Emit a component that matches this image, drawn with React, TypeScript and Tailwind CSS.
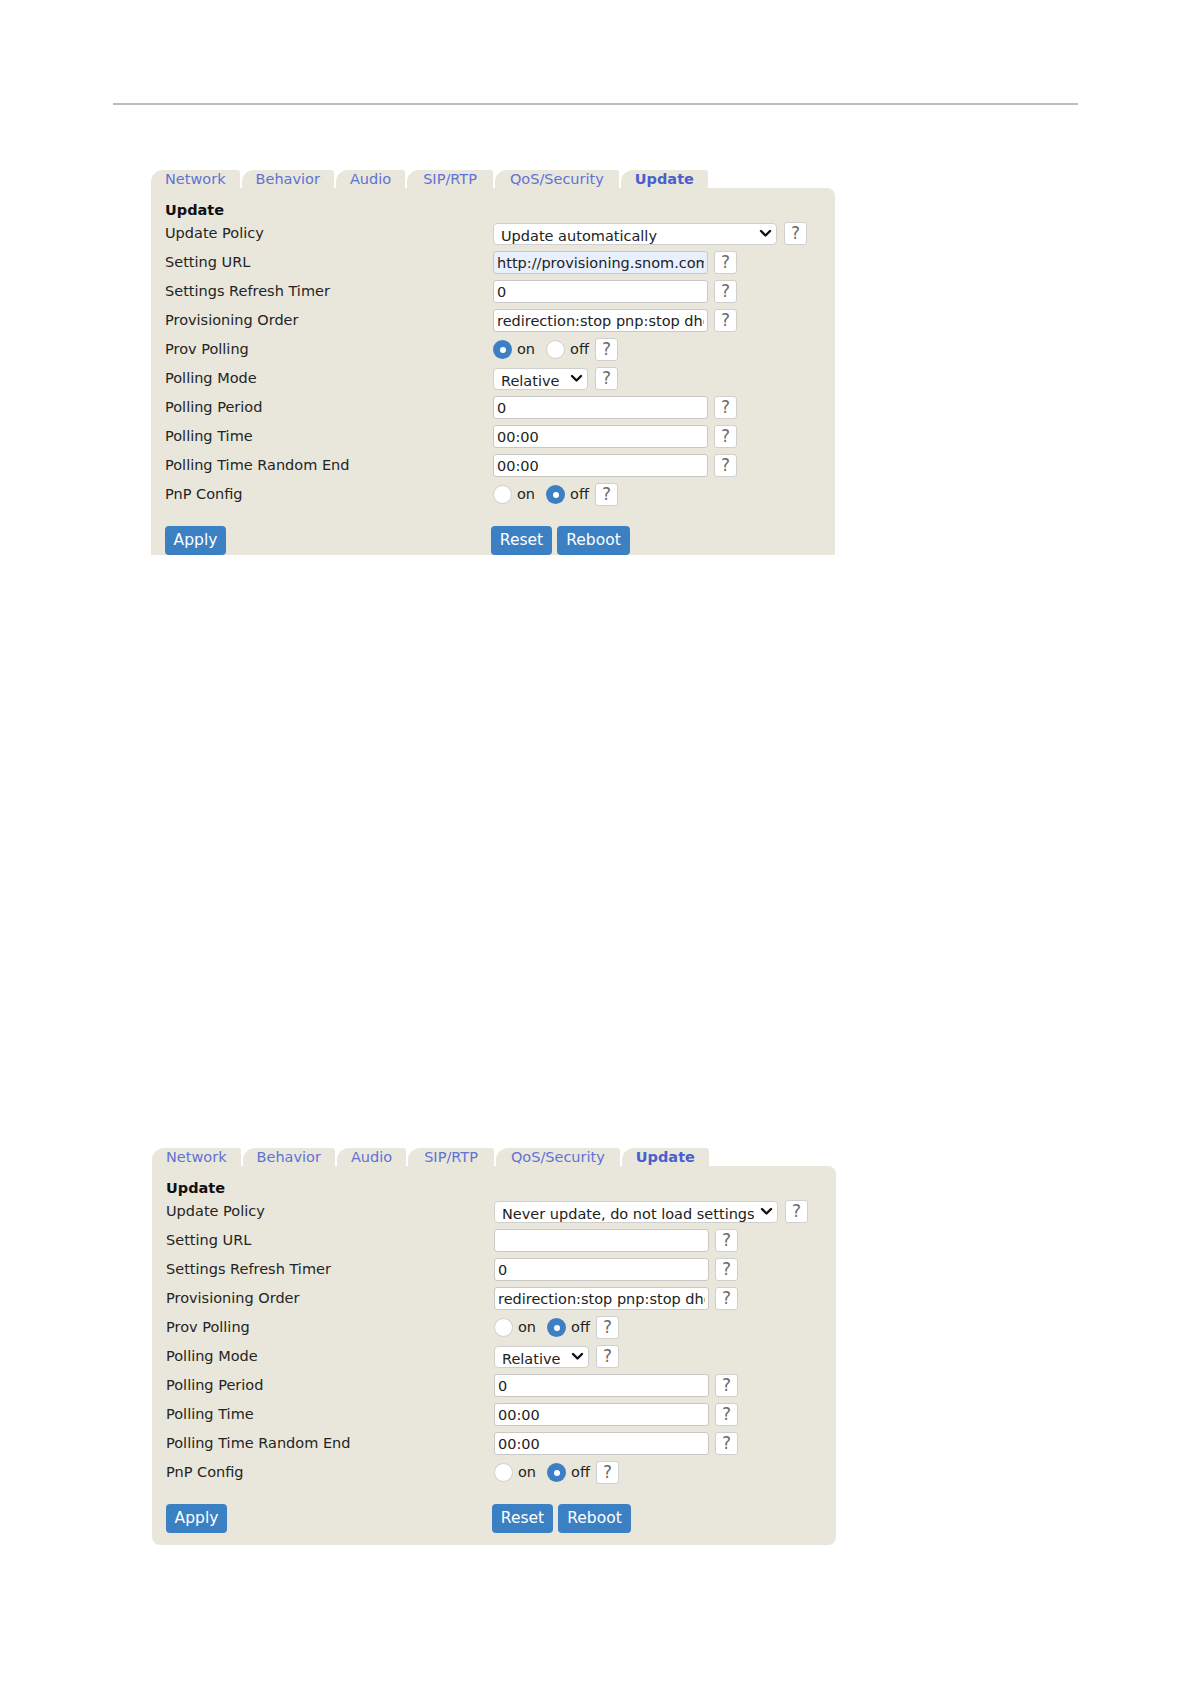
import React from "react";

// per-tab padding keeps the label spacing of the original page
const tabs = [
  { name: "Network", pad: "px-[14px]" },
  { name: "Behavior", pad: "px-[14px]" },
  { name: "Audio", pad: "px-[14px]" },
  { name: "SIP/RTP", pad: "px-[16px]" },
  { name: "QoS/Security", pad: "px-[15px]" },
  { name: "Update", pad: "px-[14px]" },
];

function Help() {
  return (
    <div className="flex h-[23px] w-[23px] items-center justify-center rounded-[3px] border border-[#cfcfcf] bg-white text-[17px] leading-none text-[#6c6c6c]">
      ?
    </div>
  );
}

function Chevron() {
  return (
    <svg width="13" height="9" viewBox="0 0 13 9" className="shrink-0">
      <path d="M2 2 L6.5 6.5 L11 2" fill="none" stroke="#111" strokeWidth="2.4" strokeLinecap="round" strokeLinejoin="round" />
    </svg>
  );
}

function Select({ value, width }: { value: string; width: string }) {
  return (
    <div className={`flex h-[22px] ${width} items-start justify-between overflow-hidden rounded-[4px] border border-[#cfcfcf] bg-white pl-[7px] pr-[4px]`}>
      <span className="pt-[4px] leading-[17px] whitespace-nowrap text-[#222]">{value}</span>
      <span className="flex h-full items-center">
        <Chevron />
      </span>
    </div>
  );
}

function TextBox({ value, autofill }: { value: string; autofill?: boolean }) {
  return (
    <input
      readOnly
      value={value}
      className={`h-[23px] w-[215px] rounded-[3px] border border-[#c8c8c8] px-[3px] text-[14.5px] text-[#222] outline-none ${
        autofill ? "bg-[#e8f0fe]" : "bg-white"
      }`}
    />
  );
}

function Radio({ checked }: { checked: boolean }) {
  return checked ? (
    <span className="flex h-[19px] w-[19px] shrink-0 items-center justify-center rounded-full bg-[#3d7fc5]">
      <span className="h-[6px] w-[6px] rounded-full bg-white" />
    </span>
  ) : (
    <span className="block h-[19px] w-[19px] shrink-0 rounded-full border border-[#cfcfcf] bg-white" />
  );
}

function OnOff({ on }: { on: boolean }) {
  return (
    <div className="flex items-center">
      <Radio checked={on} />
      <span className="ml-[5px] text-[#222]">on</span>
      <span className="ml-[11px] flex">
        <Radio checked={!on} />
      </span>
      <span className="ml-[5px] mr-[6px] text-[#222]">off</span>
      <Help />
    </div>
  );
}

function Row({ label, children }: { label: string; children: React.ReactNode }) {
  return (
    <div className="flex h-[29px] items-center">
      <div className="w-[328px] text-[#242424]">{label}</div>
      <div className="flex items-center">{children}</div>
    </div>
  );
}

function Field({ value, autofill }: { value: string; autofill?: boolean }) {
  return (
    <div className="flex items-center gap-[6px]">
      <TextBox value={value} autofill={autofill} />
      <Help />
    </div>
  );
}

type PanelProps = {
  policy: string;
  url: string;
  autofill?: boolean;
  provPolling: boolean;
};

function UpdatePanel({ policy, url, autofill, provPolling }: PanelProps) {
  return (
    <div className="w-[684px]">
      <div className="flex h-[18px] items-end">
        {tabs.map((t, i) => (
          <div
            key={t.name}
            className={`flex h-[18px] items-center rounded-tl-[12px] rounded-tr-[3px] bg-[#e9e7db] ${t.pad} leading-none ${
              i > 0 ? "ml-[2px]" : ""
            } ${t.name === "Update" ? "font-bold text-[#4a5fcf]" : "text-[#5f72d6]"}`}
          >
            {t.name}
          </div>
        ))}
      </div>
      <div className="rounded-tr-[8px] rounded-b-[8px] bg-[#e9e7db] px-[14px] pt-[13px] pb-[12px]">
        <div className="h-[18px] leading-[18px] font-bold text-[#111]">Update</div>
        <Row label="Update Policy">
          <div className="flex items-center gap-[7px]">
            <Select value={policy} width="w-[284px]" />
            <Help />
          </div>
        </Row>
        <Row label="Setting URL">
          <Field value={url} autofill={autofill} />
        </Row>
        <Row label="Settings Refresh Timer">
          <Field value="0" />
        </Row>
        <Row label="Provisioning Order">
          <Field value="redirection:stop pnp:stop dhcp:stop" />
        </Row>
        <Row label="Prov Polling">
          <OnOff on={provPolling} />
        </Row>
        <Row label="Polling Mode">
          <div className="flex items-center gap-[7px]">
            <Select value="Relative" width="w-[95px]" />
            <Help />
          </div>
        </Row>
        <Row label="Polling Period">
          <Field value="0" />
        </Row>
        <Row label="Polling Time">
          <Field value="00:00" />
        </Row>
        <Row label="Polling Time Random End">
          <Field value="00:00" />
        </Row>
        <Row label="PnP Config">
          <OnOff on={false} />
        </Row>
        <div className="mt-[17px] flex h-[29px] text-[15.5px]">
          <div className="w-[326px]">
            <button className="h-[29px] w-[61px] rounded-[4px] bg-[#3c80c4] text-white">Apply</button>
          </div>
          <div className="flex gap-[5px]">
            <button className="h-[29px] w-[61px] rounded-[4px] bg-[#3c80c4] text-white">Reset</button>
            <button className="h-[29px] w-[73px] rounded-[4px] bg-[#3c80c4] text-white">Reboot</button>
          </div>
        </div>
      </div>
    </div>
  );
}

export default function App() {
  return (
    <div className="min-h-[1684px] w-[1191px] bg-white font-['DejaVu_Sans',sans-serif] text-[14.5px]">
      <div className="px-[113px] pt-[103px]">
        <div className="h-[2px] bg-[#bdbdbd]" />
      </div>
      <div className="ml-[151px] mt-[65px] h-[385px] w-[684px] overflow-hidden">
        <UpdatePanel
          policy="Update automatically"
          url="http://provisioning.snom.com/{mac}.xml"
          autofill
          provPolling
        />
      </div>
      <div className="ml-[152px] mt-[593px]">
        <UpdatePanel policy="Never update, do not load settings" url="" provPolling={false} />
      </div>
    </div>
  );
}
